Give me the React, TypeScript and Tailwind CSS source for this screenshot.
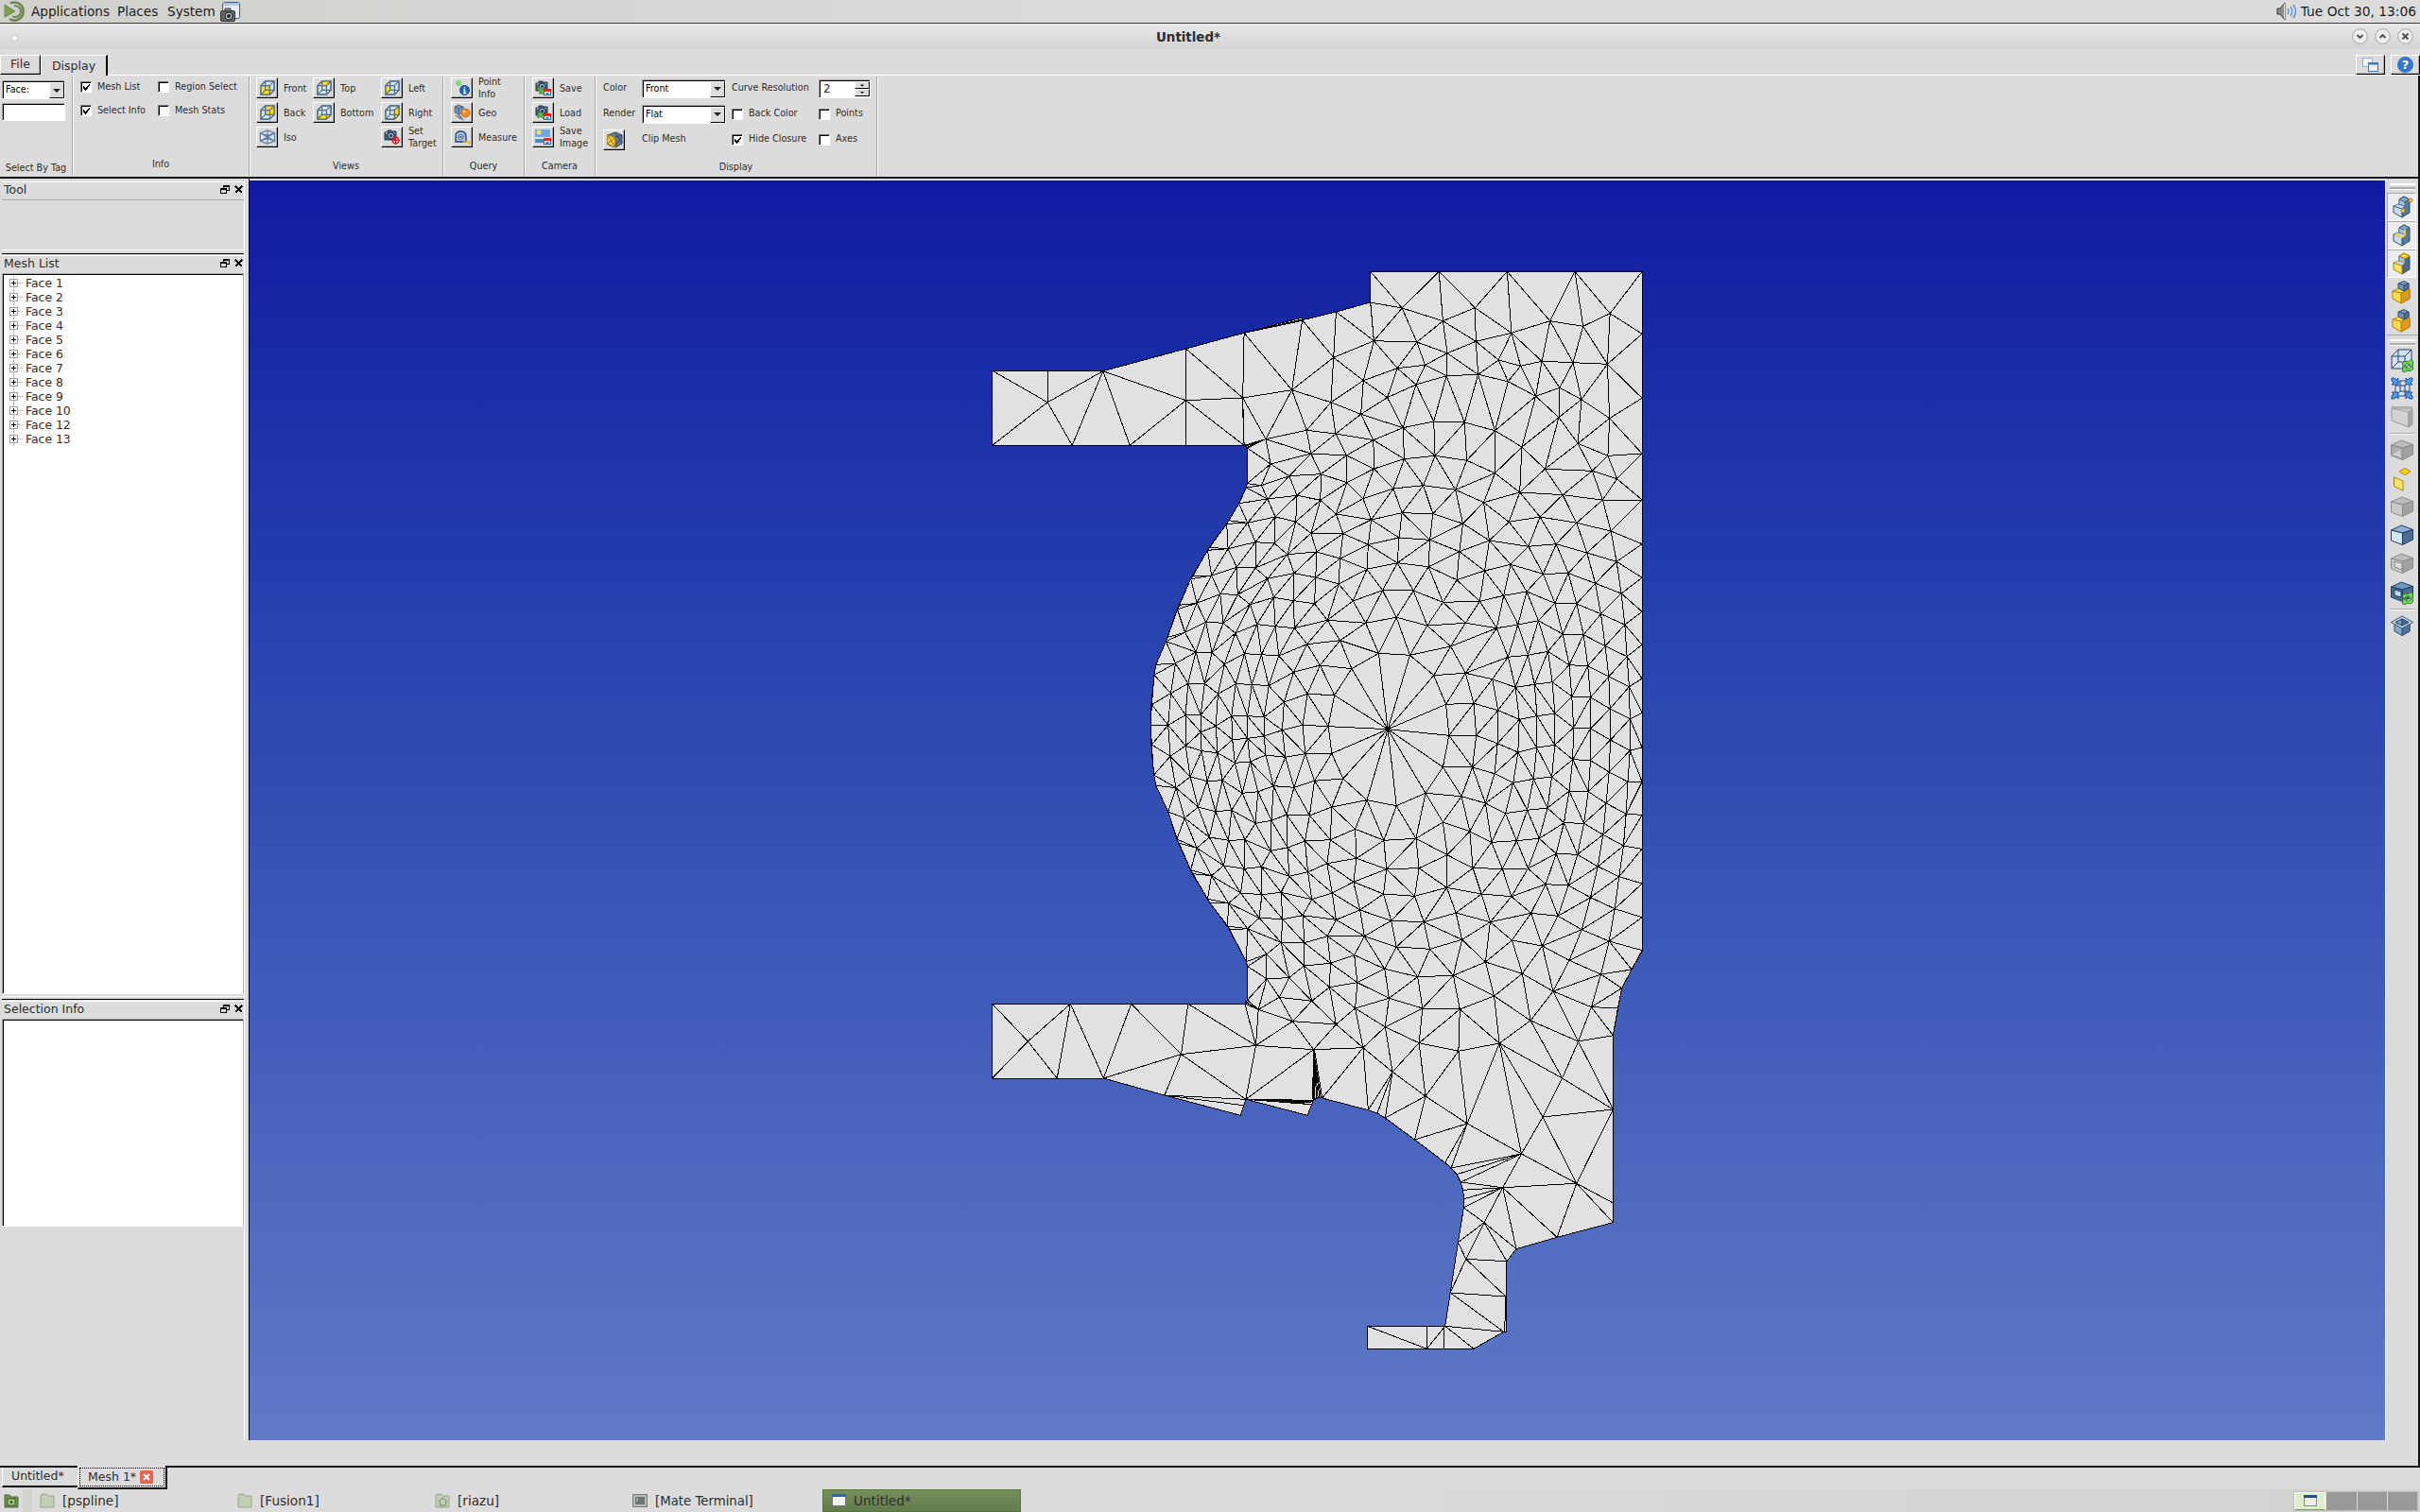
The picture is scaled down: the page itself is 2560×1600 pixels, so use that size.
import React from "react";

type Pt = [number, number];
const parse = (s: string, oy: number): Pt[] =>
  s.trim().split(/\s+/).map((p) => {
    const [x, y] = p.split(",").map(Number);
    return [x / 2.17778 + 766, y / 3 + oy];
  });

const UP = 79;
const MID = 499;
const LOW = 849;

const upper = parse(
  `914,52 1072,52 1229,52 1385,52 1540,52 914,150 987,168 1155,167 1081,209 1328,209 1466,185 1404,226 1540,250
835,180 757,206 623,247 922,272 1021,276 1157,274 1239,247 829,325 1091,311 1209,333 1260,352 1309,337 1381,341 1460,346
976,359 1040,349 1089,383 1162,379 1231,401 1350,421 1295,448 1400,458 1540,454 898,398 1019,411 733,428 823,467 953,452 620,453 623,604
892,505 989,548 1060,528 1131,531 1201,557 1348,515 1465,518 767,556 834,567 921,587 673,584 1263,609 1392,598 1461,637 1540,630
1063,637 1136,652 992,647 777,630 859,636 684,663 1316,679 1425,685 1482,710 1201,692 922,678
630,612 630,725 727,701 800,695 860,722 663,731 967,741 1036,731 1110,745 1258,753 1357,761 1449,777 1540,777
628,738 677,774 745,763 799,778 897,773 1175,785 611,788 695,831 742,846 835,822 916,840 987,818 1058,821 1127,852 1233,847 1305,831 1389,850 1468,876
588,842 583,853 631,850 777,883 851,884 909,919 980,897 1051,904 1188,906 1278,925 1342,917 1413,945 1540,917
649,911 693,915 586,932 543,928 539,937 723,950 790,942 844,963 1119,941 976,977 1048,989 1481,973 1237,982 1177,1002 1312,1012 1370,1010 1540,1024
606,991 649,993 548,1017 505,1018 500,1028 738,1010 677,1027 788,1023 906,997 841,1044 1113,1031 1432,1042 1492,1074
568,1076 608,1078 514,1105 474,1111 469,1124 691,1087 637,1109 737,1097 785,1106 874,1098 942,1064 1013,1065 1081,1102 1166,1099 1221,1081 1274,1068 1339,1105 1389,1107 1445,1139 1540,1132
535,1165 575,1168 487,1198 447,1213 443,1226 653,1172 695,1178 603,1200 739,1184 815,1159 903,1168 974,1150 1045,1176 1133,1168 1205,1184 1254,1173 1301,1160 1357,1203 1405,1205 1500,1173 1455,1241
768,1235 844,1223 1099,1242 1540,1237`, UP);

const middle = parse(
  `512,0 549,2 465,36 420,40 416,73 578,38 624,5 663,8 703,12 737,64 798,42 871,53 933,4 1005,10 1060,74 1133,67 1195,86 1231,16 1277,10 1323,-2 1372,41 1415,44 1463,78 1505,14
1510,110 1540,84 1333,95 1292,103 1248,112 1378,141 1421,144 494,100 532,100 454,131 410,167 604,101 641,103 680,107 563,133 769,133 831,137 715,159 1088,166 1152,163 1208,185 1466,180 1339,195 1298,203 1257,214 1512,212 1540,193
488,200 523,200 448,232 408,232 594,203 631,203 669,206 558,235 523,254 711,248 758,232 817,236 954,245 1095,265 1158,265 1207,290 1254,318 1382,240 1421,243 1467,279 1339,295 1297,303 1512,313 1540,303
596,278 631,274 669,267 488,298 410,294 525,314 562,320 453,331 637,348 602,352 673,327 718,334 764,323 825,322
415,390 499,396 1081,365 1149,366 1200,386 1380,341 1421,344 1464,381 1332,396 1290,403 1243,415 1507,412 1540,412
420,424 466,431 538,410 573,407 619,448 655,443 691,425 738,430 785,409 851,402 1041,448 1124,458 1179,480 1372,441 1416,443 1457,480 1322,495 1275,502 1225,512 1503,514 1540,517
448,507 517,492 557,506 594,502 486,527 649,544 686,535 721,516 774,519 825,492 906,470 974,488 1081,540 1143,569 1360,542 1406,544 1450,580 1303,592 1251,599 1193,604 1497,615 1540,625
468,594 473,607 543,588 587,598 625,596 514,622 684,631 723,621 763,600 822,596 879,562 945,598 1019,592 1091,644 1150,686 1218,688 1277,687 1342,640 1391,643 1438,681 1487,713 1540,735
500,692 505,704 576,678 623,688 663,682 548,710 727,712 770,698 814,671 882,655 951,689 1026,686 1090,748 1170,768 1239,776 1318,737 1370,741 1421,779 1477,815 1540,842
539,784 544,796 587,797 615,765 664,770 708,763 779,785 826,765 875,730 944,768 1016,775 1111,828 1190,857 1284,829 1346,838 1401,881 1464,918 1540,947
585,870 590,882 631,878 658,844 712,848 758,836 835,850 890,819 962,853 1037,857 1125,913 1240,915 1310,933 1372,979 1445,1023 1516,1008
675,959 708,922 762,923 815,902 900,902 877,962 974,936 1051,943 1179,984 1264,1021 1335,1077
628,983 631,998 761,996 822,988 947,1006 1023,1031 1105,1027 1199,1092 1423,1127 1493,1067 1484,1130
675,1037 727,1034 820,1064 884,1049 957,1099 1034,1131 1120,1134 1283,1170
631,1105 704,1096 779,1108 656,1135 879,1131 735,1172 835,1182 948,1190`, MID);

const lower = parse(`625,67 1393,186 1473,167 1211,192 1117,217 1026,191 897,206 783,212 650,199 965,283`, LOW);

const region: Pt[] = [
  ...parse(`914,51 1541,51`, UP),
  ...parse(`1541,947 1493,1067`, MID),
  ...parse(`1474,167 1393,186 1283,120 1211,192 1117,217 1026,191 965,283 897,206 783,212 650,199 625,67 631,55`, LOW),
  ...parse(`630,998 628,983 590,882 544,796 505,704 473,607 448,507 420,424 415,390 409,294 408,232 409,167 416,73 420,40`, MID),
  ...parse(`443,1226 469,1124 500,1028 539,937 583,853 611,788 628,738 630,725 630,612 622,604 618,453 623,246 757,206 835,180 914,150`, UP),
];

const outline: Pt[] = [
  ...parse(`914,52 1540,52`, UP),
  ...parse(`1540,950 1516,1008 1493,1067`, MID),
  ...parse(`1473,167 1473,761 1344,808 1250,845 1228,884 1227,1108 1221,1108 1152,1162 907,1162 907,1090 1086,1090 1098,984 1116,824 1129,714 1130,686 1127,658 1122,633 1113,608 1100,588 1086,571 1016,498 948,429 930,414 909,404 803,366 796,363 783,372 769,421 627,370 615,421 440,357 299,303 43,303 43,67 625,67 631,55`, LOW),
  ...parse(`630,998 628,983 587,876 541,790 502,700 470,600 448,507 420,424 415,390 409,294 408,232 409,167 416,73 420,40`, MID),
  ...parse(`443,1226 469,1124 500,1028 539,937 583,853 611,788 628,738 630,725 630,612 625,604 43,604 43,367 298,368 489,297 623,247 755,199 757,206 835,180 914,150`, UP),
];

const upperEdges = [
  "43,367 170,467 298,368", "170,367 170,467 43,604", "170,467 227,604 298,368 360,604 489,461 298,368",
  "489,297 489,604", "489,297 620,453 489,461 623,604", "620,453 620,490 623,604 673,584 626,607 632,611 673,584 628,613", "623,604 660,590 630,610",
  "623,247 757,208", "655,237 757,204", "630,725 663,731 628,738",
];
const lowerEdges = [
  "43,67 125,186 192,303", "43,303 125,186 223,67 192,303", "223,67 299,303 363,67 478,227 299,303",
  "440,357 478,227 494,67 650,199 478,227 627,370 650,199", "625,67 650,199 656,85 625,58 645,78 625,67", "656,85 627,62", "783,212 627,370",
  "783,212 781,370", "783,212 784,368", "783,212 786,368", "783,212 790,366", "783,212 793,364", "783,212 797,364", "783,212 800,365", "785,212 803,366",
  "897,206 803,366", "897,206 909,404 965,283 930,414", "965,283 948,429 1041,360 965,283", "1026,191 1041,360 1016,498 1137,447 1041,360 1117,217 1137,447 1211,192",
  "1086,571 1137,447 1100,588 1262,543 1137,447", "1113,608 1262,543 1122,633", "1211,192 1262,543 1219,650 1389,637 1262,543 1311,426 1356,303 1211,192 1311,426 1473,402 1356,303 1283,120",
  "1311,426 1389,637 1473,402 1393,186 1356,303", "1473,699 1389,637 1473,761", "1389,637 1344,808 1219,650 1250,845 1176,761 1219,650 1122,633", "1127,658 1219,650 1130,686", "1129,714 1219,650",
  "1129,714 1176,761 1116,824 1134,877 1176,761 1228,884 1134,877 1098,984 1226,996 1134,877", "1098,984 1221,1108 1086,1090 1152,1162", "1226,996 1223,1108", "1044,1090 1044,1162 1086,1090", "1084,1090 1084,1162", "907,1090 1044,1162",
  "440,357 627,370", "440,357 622,389", "627,370 782,374", "627,370 780,373", "627,371 781,377", "680,376 778,380 720,379 778,386 627,370",
];

function inside(x: number, y: number, poly: Pt[]) {
  let hit = false;
  for (let i = 0, j = poly.length - 1; i < poly.length; j = i++) {
    const [xi, yi] = poly[i];
    const [xj, yj] = poly[j];
    if (yi > y !== yj > y && x < ((xj - xi) * (y - yi)) / (yj - yi) + xi) hit = !hit;
  }
  return hit;
}

// Bowyer-Watson triangulation; returns one SVG path holding every triangle of the part.
function triangulate(src: Pt[]): string {
  const p: Pt[] = [...src, [-20000, -10000], [20000, -10000], [1000, 30000]];
  const n = src.length;
  type Tri = { v: number[]; x: number; y: number; r: number };
  const make = (a: number, b: number, c: number): Tri => {
    const [ax, ay] = p[a], [bx, by] = p[b], [cx, cy] = p[c];
    const d = 2 * (ax * (by - cy) + bx * (cy - ay) + cx * (ay - by)) || 1e-9;
    const A = ax * ax + ay * ay, B = bx * bx + by * by, C = cx * cx + cy * cy;
    const x = (A * (by - cy) + B * (cy - ay) + C * (ay - by)) / d;
    const y = (A * (cx - bx) + B * (ax - cx) + C * (bx - ax)) / d;
    return { v: [a, b, c], x, y, r: (x - ax) ** 2 + (y - ay) ** 2 };
  };
  let tris = [make(n, n + 1, n + 2)];
  for (let i = 0; i < n; i++) {
    const edges = new Map<string, [number, number]>();
    const keep: Tri[] = [];
    for (const t of tris) {
      if ((p[i][0] - t.x) ** 2 + (p[i][1] - t.y) ** 2 < t.r - 1e-6) {
        for (let k = 0; k < 3; k++) {
          const a = t.v[k], b = t.v[(k + 1) % 3];
          const key = a < b ? a + "_" + b : b + "_" + a;
          if (edges.has(key)) edges.delete(key);
          else edges.set(key, [a, b]);
        }
      } else keep.push(t);
    }
    edges.forEach(([a, b]) => keep.push(make(a, b, i)));
    tris = keep;
  }
  const lines = new Set<string>();
  for (const t of tris) {
    if (t.v.some((k) => k >= n)) continue;
    const gx = (p[t.v[0]][0] + p[t.v[1]][0] + p[t.v[2]][0]) / 3;
    const gy = (p[t.v[0]][1] + p[t.v[1]][1] + p[t.v[2]][1]) / 3;
    if (!inside(gx, gy, region)) continue;
    for (let k = 0; k < 3; k++) {
      const a = Math.min(t.v[k], t.v[(k + 1) % 3]);
      const b = Math.max(t.v[k], t.v[(k + 1) % 3]);
      lines.add(`M${p[a][0].toFixed(1)} ${p[a][1].toFixed(1)}L${p[b][0].toFixed(1)} ${p[b][1].toFixed(1)}`);
    }
  }
  return [...lines].join("");
}

const str = (q: Pt[]) => q.map(([x, y]) => `${x.toFixed(1)},${y.toFixed(1)}`).join(" ");
const meshPath = triangulate([...upper, ...middle, ...lower]);

function Mesh() {
  return (
    <svg width="2259" height="1333" className="block" shapeRendering="crispEdges" fill="none" stroke="#000" strokeWidth="1">
      <polygon points={str(outline)} fill="#e1e1e1" />
      <path d={meshPath} />
      {upperEdges.map((e) => <polyline key={e} points={str(parse(e, UP))} />)}
      {lowerEdges.map((e) => <polyline key={e} points={str(parse(e, LOW))} />)}
      <polygon points={str(outline)} />
    </svg>
  );
}

/* ---------- icons ---------- */
const faces: Record<string, string> = {
  Front: "2,7 12,7 12,17 2,17",
  Back: "7,2 17,2 17,12 7,12",
  Top: "2,7 7,2 17,2 12,7",
  Bottom: "2,17 7,12 17,12 12,17",
  Left: "2,7 7,2 7,12 2,17",
  Right: "12,7 17,2 17,12 12,17",
};
function ViewIcon({ face }: { face: string }) {
  return (
    <svg width="18" height="18" viewBox="0 0 19 19">
      {face === "Iso" ? (
        <g fill="#d3e3f5" stroke="#5f7a96" strokeWidth="1.2">
          <polygon points="1.500,5 9.500,2 17.500,5 17.500,14 9.500,17 1.500,14" />
          <path d="M1.500 5L17.500 14M17.500 5L1.500 14M9.500 2V17M1.500 5L9.500 8L17.500 5M1.500 14L9.500 11L17.500 14" fill="none" />
        </g>
      ) : (
        <g stroke="#55708c" strokeWidth="1.3" strokeLinejoin="round">
          <polygon points="2,7 7,2 17,2 17,12 12,17 2,17" fill="#d3e3f5" />
          <polygon points={faces[face]} fill="#fddf10" stroke="#c89b10" />
          <path d="M2 7H12V17M12 7L17 2M7 2V12H17M7 12L2 17" fill="none" />
          <polygon points="2,7 7,2 17,2 17,12 12,17 2,17" fill="none" />
        </g>
      )}
    </svg>
  );
}
const Camera = () => (
  <g>
    <path d="M1 4H4V2H8V3H13V12H1Z" fill="#4b6178" stroke="#2b3a49" />
    <path d="M2 5H4M10 5H12" stroke="#c6d2de" />
    <circle cx="7.500" cy="7.500" r="3.500" fill="#8fb0d0" stroke="#182635" />
    <circle cx="7.500" cy="7.500" r="1.500" fill="#1d3b60" />
  </g>
);
const Floppy = () => (
  <g>
    <rect x="9.500" y="10.500" width="7" height="6" fill="#fff" stroke="#2462a8" />
    <rect x="9" y="10" width="8" height="3" fill="#e62222" />
    <rect x="11.500" y="14" width="3" height="3" fill="#3a78be" />
  </g>
);
function ToolIcon({ name }: { name: string }) {
  if (faces[name] || name === "Iso") return <ViewIcon face={name} />;
  return (
    <svg width="18" height="18" viewBox="0 0 18 18">
      {name === "Target" && (
        <g><Camera /><g stroke="#e01818" fill="none" strokeWidth="1.200"><circle cx="12.500" cy="12.500" r="3.300" /><path d="M12.500 8V17M8 12.500H17" /></g></g>
      )}
      {name === "Point" && (
        <g>
          <circle cx="5" cy="4" r="3" fill="#7fd67a" /><circle cx="8" cy="7" r="2" fill="#a6dba0" />
          <circle cx="11.500" cy="11.500" r="5" fill="#1f68c2" stroke="#184e94" />
          <path d="M11.500 8V9.200M11.500 10.500V14.500M10.300 10.800H12M10 14.500H13.300" stroke="#fff" strokeWidth="1.400" />
        </g>
      )}
      {name === "Geo" && (
        <g strokeWidth=".8">
          <path d="M1 3L5 1L10 3V9L5 11L1 9Z" fill="#7795b5" stroke="#40566d" /><path d="M1 3L5 5L10 3M5 5V11" stroke="#40566d" fill="none" />
          <path d="M2 12L8 16M5 11L10 17" stroke="#62778d" strokeWidth="1.500" />
          <circle cx="12.500" cy="9.500" r="4.500" fill="#f28a1c" stroke="#b8600c" /><circle cx="11" cy="8" r="1.800" fill="#fcc07a" />
        </g>
      )}
      {name === "Measure" && (
        <g>
          <path d="M2 14V8Q2 3 7.500 3Q13 3 13 9V14Z" fill="#a9c3e6" stroke="#24457e" strokeWidth="1.400" />
          <circle cx="7.500" cy="9" r="2.500" fill="#fff" stroke="#24457e" /><circle cx="7.500" cy="9" r="1" fill="#111" />
          <path d="M10 14H16.500V17" stroke="#e8b414" strokeWidth="1.600" fill="none" />
        </g>
      )}
      {(name === "Save" || name === "Load") && (
        <g>
          <Camera />
          {name === "Save" ? <path d="M3 8L8 11L10 9V15H4L6 13L2 10Z" fill="#59c24b" stroke="#27751f" strokeWidth=".8" /> : <path d="M3 9H9L8 11L11 14L9 16L6 13L3 15Z" fill="#59c24b" stroke="#27751f" strokeWidth=".8" />}
          <Floppy />
        </g>
      )}
      {name === "Image" && (
        <g>
          <rect x="0" y="1" width="16" height="13" fill="#6ea8e4" /><rect x="0" y="9" width="16" height="2" fill="#d9edf8" /><rect x="0" y="11" width="16" height="4" fill="#4c8bc0" />
          <circle cx="4" cy="4" r="2.500" fill="#ffe04a" /><Floppy />
        </g>
      )}
      {name === "Clip" && (
        <g strokeWidth="1">
          <path d="M2 4L10 1L17 4V13L10 17L2 14Z" fill="#5f7c98" stroke="#34485c" /><path d="M10 6L17 4M10 6V17M10 2L17 12M17 5L10 15" stroke="#34485c" />
          <path d="M1.500 4L9.500 7V16.500L1.500 13Z" fill="#fbd640" stroke="#c08f10" strokeWidth="1.300" /><path d="M1.500 4L9.500 16M9.500 7L1.500 13" stroke="#8b6c1c" />
        </g>
      )}
    </svg>
  );
}

function Box({ t, l, r, s }: { t: string; l: string; r: string; s: string }) {
  return (
    <g stroke={s} strokeWidth="1" strokeLinejoin="round">
      <polygon points="0.500,6 11.500,1 23.500,5.500 12.500,9" fill={t} />
      <polygon points="0.500,6 12.500,9 12.500,21.500 0.500,17" fill={l} />
      <polygon points="12.500,9 23.500,5.500 23.500,16 12.500,21.500" fill={r} />
    </g>
  );
}
const Refresh = () => (
  <g stroke="#1f6b1f" strokeWidth=".8" fill="#6fdc50">
    <path d="M12.500 18V15Q14 12.500 19 13.500L21 11.500L23.500 13V18H18.500L20 16.300Q16 15 15.500 18Z" />
    <path d="M23.500 19V22Q22 24.500 17 23.500L15 24.700L12.500 24V19H17.500L16 20.800Q20 22 20.500 19Z" />
  </g>
);
function Blocks({ base, side, top, s }: { base: string; side: string; top: string; s: string }) {
  return (
    <g strokeWidth="1" strokeLinejoin="round">
      <polygon points="9,4 14,1 20,4 20,18 12,23 12,12 9,10" fill={side} stroke="#34506e" />
      <polygon points="9,4 14,1 20,4 15,7" fill={top} stroke={top === "#fddf10" ? s : "#34506e"} />
      <polygon points="9,4 15,7 15,12 9,10" fill="#a9c2dc" stroke="#45617e" strokeWidth=".6" />
      <polygon points="3,11 12,14 12,23 3,18" fill={base} stroke={s} />
      <polygon points="3,11 8,9 15,11 12,14" fill="#c5d9ee" stroke={s} strokeWidth=".7" />
    </g>
  );
}
function SideIcon({ k }: { k: string }) {
  const g = { t: "#bdbdbd", l: "#c9c9c9", r: "#a2a2a2", s: "#8b8b8b" };
  return (
    <svg width="24" height="25" viewBox="0 0 24 25">
      {k === "pts" && <g><Blocks base="#c7dcf2" side="#57779c" top="#84a5cb" s="#34506e" /><g fill="#fcd03a" stroke="#b98208"><circle cx="21" cy="5" r="2" /><circle cx="13" cy="16" r="2" /></g></g>}
      {k === "edge" && <g><Blocks base="#c7dcf2" side="#57779c" top="#84a5cb" s="#34506e" /><path d="M4 11L12 14L15 12V6" stroke="#f6d326" strokeWidth="1.800" fill="none" /></g>}
      {k === "face" && <Blocks base="#fce868" side="#4c6888" top="#fddf10" s="#b27c0c" />}
      {(k === "body" || k === "body2") && (
        <g strokeLinejoin="round">
          <g stroke="#b27c0c"><polygon points="2,11 12,7 20,9 20,19 11,24 2,19" fill="#fcdc4c" /><polygon points="11,13 20,9 20,19 11,24" fill="#dd9b22" /><path d="M2 11L11 13" /></g>
          <g stroke="#34506e"><polygon points="8,3 14,0.500 19,3 19,8 14,11 8,8" fill="#7696ba" /><polygon points="14,5 19,3 19,8 14,11" fill="#4f6d90" /><path d="M8 3L14 5" /></g>
        </g>
      )}
      {k === "wire" && <g><g fill="#d3e3f5" stroke="#28435f"><polygon points="1,8 8,1 22,1 22,14 15,21 1,21" /><path d="M1 8H15V21M15 8L22 1M8 1V14H22M8 14L1 21" fill="none" /></g><Refresh /></g>}
      {k === "fit" && (
        <g>
          <g fill="#d3e3f5" stroke="#28435f"><polygon points="5,9 10,4 20,4 20,15 15,20 5,20" /><path d="M5 9H15V20M15 9L20 4M10 4V15H20M10 15L5 20" fill="none" /></g>
          <g fill="#4f98f4" stroke="#154a98" strokeWidth=".9"><path d="M1 1H4L6 3L8 1V8H1L3 6L1 4Z" /><path d="M23 1H20L18 3L16 1V8H23L21 6L23 4Z" /><path d="M1 23H4L6 21L8 23V16H1L3 18L1 20Z" /><path d="M23 23H20L18 21L16 23V16H23L21 18L23 20Z" /></g>
        </g>
      )}
      {k === "clip" && <g stroke="#9b9b9b"><polygon points="1,3 1,1 23,1 23,4 19,5" fill="#b0b0b0" stroke="none" /><polygon points="1,3 19,7 19,23 1,16" fill="#d2d2d2" /><polygon points="19,7 23,4 23,20 19,23" fill="#a6a6a6" /></g>}
      {k === "open" && <g><Box {...g} l="#adadad" /><path d="M2 16L10 11L11 19Z" fill="#d0d0d0" /></g>}
      {k === "yel" && <g stroke="#b27c0c"><polygon points="9,4 15,0.500 21,4 15,7.500" fill="#fdd800" /><polygon points="3.500,10 13,14 13,24 3.500,19.500" fill="#fce868" /></g>}
      {k === "grey" && <Box {...g} />}
      {k === "blue" && <Box t="#8db2db" l="#d4e6f8" r="#4d6c91" s="#1f3c5c" />}
      {k === "hole" && <g><Box {...g} /><path d="M4 9L12 11V18L4 15Z" fill="#dcdcdc" stroke="#888" /></g>}
      {k === "bref" && <g><Box t="#6f96c0" l="#4d6f94" r="#4d6c91" s="#1f3c5c" /><path d="M4 9L11 11V17L4 15Z" fill="#c5dcf2" stroke="#1f3c5c" /><Refresh /></g>}
      {k === "cut" && (
        <g stroke="#28435f" strokeWidth=".9" strokeLinejoin="round">
          <polygon points="4,9 12,13 20,9 20,17 12,21.500 4,17" fill="#87a7ca" /><polygon points="12,13 20,9 20,17 12,21.500" fill="#54749a" />
          <path d="M0.500 7.500L12 1L23.500 7.500L12 14ZM5 7.500L12 11L19 7.500L12 4Z" fill="#cadbec" fillRule="evenodd" /><polygon points="5,7.500 12,4 12,11" fill="#7d9dc0" /><polygon points="19,7.500 12,4 12,11" fill="#4d6c91" />
        </g>
      )}
    </svg>
  );
}

/* ---------- widgets ---------- */
function Check({ on, children }: { on?: boolean; children: string }) {
  return (
    <div className="flex h-3 items-center gap-[6px]">
      <span className="flex size-3 items-center justify-center border border-[#777] border-r-white border-b-white bg-white shadow-[inset_1px_1px_0_#000]">
        {on && <svg width="9" height="9" viewBox="0 0 9 9" className="mt-px ml-px" shapeRendering="crispEdges"><path d="M1 3.500L3.500 6.500L8 1.500" fill="none" stroke="#000" strokeWidth="1.800" /></svg>}
      </span>
      <span className="whitespace-nowrap">{children}</span>
    </div>
  );
}
function Combo({ children, w }: { children: string; w: string }) {
  return (
    <div className={`${w} flex h-5 border border-[#a5a5a5] border-r-white border-b-white bg-white shadow-[inset_1px_1px_0_#000]`}>
      <span className="flex-1 pl-[3px] leading-[17px] whitespace-nowrap text-black">{children}</span>
      <span className="mt-px flex w-4 items-center justify-center border border-white border-r-black border-b-black bg-[#dcdcdc]">
        <svg width="8" height="4"><path d="M0 0H8L4 4Z" fill="#222" /></svg>
      </span>
    </div>
  );
}
function Btn({ icon, label }: { icon: string; label: string }) {
  return (
    <div className="flex h-[26px] items-start gap-[6px]">
      <span className="flex h-[22px] w-[23px] shrink-0 items-center justify-center border border-white border-r-black border-b-black bg-[#dcdcdc] shadow-[inset_-1px_-1px_0_#aaa]"><ToolIcon name={icon} /></span>
      <span className="flex h-[22px] items-center leading-[13px] whitespace-pre">{label}</span>
    </div>
  );
}
function Group({ w, title, pad, children, pb = "pb-[4px]" }: { w: string; title: string; pad: string; pb?: string; children: React.ReactNode }) {
  return (
    <section className={`${w} ${pb} flex shrink-0 flex-col justify-between border-r border-[#a5a5a5] shadow-[1px_0_0_#fff]`}>
      <div className={pad}>{children}</div>
      <div className="text-center leading-3">{title}</div>
    </section>
  );
}
function DockTitle({ children }: { children: string }) {
  return (
    <div className="flex h-[19px] items-center border-t border-white pb-[3px] pl-[2px] text-[12.5px] leading-4">
      <span className="flex-1">{children}</span>
      <svg width="26" height="12" shapeRendering="crispEdges" fill="none" stroke="#000">
        <path d="M4.500 4V1.500H10.500V6.500H8M4 2H11M1.500 4.500H7.500V9.500H1.500ZM1 5H8" />
        <path d="M17 2L24 9M24 2L17 9" strokeWidth="1.600" />
      </svg>
    </div>
  );
}
function Folder({ home }: { home?: boolean }) {
  return (
    <svg width="17" height="16" viewBox="0 0 17 16">
      <path d="M1 3Q1 1 3 1H7L8.500 3H15V15H1Z" fill="#c3ceb6" stroke="#97a58a" />
      {home && <path d="M4 9L8.500 5L13 9M5.500 9V13H11.500V9" fill="none" stroke="#8b997e" strokeWidth="1.300" />}
    </svg>
  );
}
function SideButton({ k, on }: { k: string; on?: boolean }) {
  return (
    <div className={on ? "flex h-[30px] w-[31px] items-center justify-center border border-[#aaa] border-r-white border-b-white bg-[#ededed]" : "flex h-[30px] w-[31px] items-center justify-center"}>
      <SideIcon k={k} />
    </div>
  );
}
const Handle = () => <div className="ml-[3px] h-[6px] w-[27px] border-y-2 border-t-white border-b-[#aaa] shadow-[0_1px_0_#fff]" />;
const Rule = () => <div className="my-[2px] ml-[3px] h-[2px] w-[27px] border-t border-b border-t-[#aaa] border-b-white" />;

const names = [1, 2, 3, 4, 5, 6, 7, 8, 9, 10, 12, 13];

export default function App() {
  return (
    <div className="flex h-[1600px] w-[2560px] flex-col overflow-hidden bg-[#dcdcdc] font-['DejaVu_Sans',sans-serif] text-[#2d2d2d]">
      {/* desktop panel */}
      <header className="flex h-[25px] shrink-0 items-center border-b border-[#3c3c3c] bg-linear-to-r from-[#d0d1cc] to-[#dcdcdc] to-50% pl-1 text-[13.6px] text-[#1c1c1c]">
        <svg width="24" height="22" viewBox="0 0 24 22" fill="none" stroke="#6f8a52">
          <path d="M1 4L12 11L1 17Z" fill="#7ba04c" />
          <path d="M7 2.500A9.500 9.500 0 1 1 6 19" strokeWidth="2.600" /><path d="M11 5.500A5.800 5.800 0 1 1 9 16" strokeWidth="2" />
        </svg>
        <span className="ml-[5px] w-[91px]">Applications</span>
        <span className="w-[53px]">Places</span>
        <span className="w-[56px]">System</span>
        <svg width="22" height="22" viewBox="0 0 22 22">
          <rect x="2.500" y="1.500" width="18" height="17" rx="2" fill="#e9edf2" stroke="#2d5c9a" /><rect x="3" y="2" width="17" height="3" fill="#b7c8de" />
          <rect x=".5" y="10.500" width="15" height="11" rx="1.500" fill="#666" stroke="#333" /><path d="M5 10V8H11V10" fill="#999" stroke="#333" />
          <circle cx="9" cy="16" r="4" fill="#b9c2cc" stroke="#222" /><circle cx="9" cy="16" r="2" fill="#152030" />
        </svg>
        <div className="flex-1" />
        <svg width="22" height="20" viewBox="0 0 22 20"><path d="M1 7H4L9 1V19L4 13H1Z" fill="#8c8c8c" stroke="#3a3a3a" /><path d="M8.500 2V18" stroke="#e8e8e8" /><path d="M12 7Q14 10 12 13M15 5Q18.500 10 15 15M18 3Q23 10 18 17" fill="none" stroke="#5b8cc4" strokeWidth="1.300" /></svg>
        <span className="mr-[4px] ml-[4px] text-[13.8px]">Tue Oct 30, 13:06</span>
      </header>
      {/* title bar */}
      <div className="grid h-[27px] shrink-0 grid-cols-[72px_1fr_72px] items-center bg-linear-to-b from-[#e9e9e9] to-[#d3d3d3]">
        <span className="mt-1 ml-3 size-[7px] rounded-full border border-[#c4c4c4] bg-white" />
        <span className="pt-[2px] pr-[46px] text-center text-[13.4px] leading-6 font-bold">Untitled*</span>
        <span className="flex gap-[7px]">
          {["M5.500 7L8.500 10L11.500 7", "M5.500 10L8.500 7L11.500 10", "M5.500 5.500L11.500 11.500M11.500 5.500L5.500 11.500"].map((d) => (
            <svg key={d} width="17" height="17"><circle cx="8.500" cy="8.500" r="7.800" fill="#eee" stroke="#a3a3a3" /><path d={d} fill="none" stroke="#4a4a4a" strokeWidth="1.800" /></svg>
          ))}
        </span>
      </div>
      {/* ribbon tabs */}
      <div className="flex h-7 shrink-0 items-end text-[12.5px]">
        <div className="mb-px flex h-[21px] w-[43px] items-center border border-white border-r-black border-b-black pl-[10px] shadow-[inset_-1px_-1px_0_#aaa]">File</div>
        <div className="flex h-[22px] w-[71px] items-center justify-center border-t border-r-2 border-l border-white border-r-black pt-px">Display</div>
        <div className="h-full flex-1 border-b border-white" />
        <div className="flex h-full items-start gap-[6px] border-b border-white pt-[6px]">
          <span className="flex h-[21px] w-[31px] items-center justify-center border border-white border-r-black border-b-black shadow-[inset_-1px_-1px_0_#aaa]">
            <svg width="18" height="16"><rect x=".5" y=".5" width="10" height="9" fill="#f4f8fd" stroke="#8fb4dc" /><rect x="6.500" y="5.500" width="10" height="9" fill="#e4eefa" stroke="#3f78b8" /><path d="M6 6.500H17" stroke="#3f78b8" strokeWidth="2" /></svg>
          </span>
          <span className="flex h-[21px] w-[31px] items-center justify-center border border-white border-r-black border-b-black shadow-[inset_-1px_-1px_0_#aaa]">
            <span className="flex size-[17px] items-center justify-center rounded-full bg-[#3577d4] text-[13px] leading-none font-bold text-white">?</span>
          </span>
        </div>
      </div>
      {/* ribbon */}
      <div className="flex h-[109px] shrink-0 border-r-2 border-b-2 border-[#111] text-[9.65px]">
        <div className="flex h-[107px] pt-px pb-px">
          <Group w="w-[77px]" title="Select By Tag" pad="flex flex-col gap-1 pl-[2px] pt-[4px]" pb="pb-[2px]">
            <Combo w="w-[67px]">Face:</Combo>
            <div className="h-[19px] w-[67px] border border-[#a5a5a5] border-r-white border-b-white bg-white shadow-[inset_1px_1px_0_#000]" />
          </Group>
          <Group w="w-[187px]" title="Info" pb="pb-[6px]" pad="grid grid-cols-[82px_1fr] gap-y-[13px] pl-2 pt-[5px]">
            <Check on>Mesh List</Check><Check>Region Select</Check>
            <Check on>Select Info</Check><Check>Mesh Stats</Check>
          </Group>
          <Group w="w-[205px]" title="Views" pad="grid grid-cols-[60px_72px_60px] pl-[7px] pt-[1px]">
            <Btn icon="Front" label="Front" /><Btn icon="Top" label="Top" /><Btn icon="Left" label="Left" />
            <Btn icon="Back" label="Back" /><Btn icon="Bottom" label="Bottom" /><Btn icon="Right" label="Right" />
            <Btn icon="Iso" label="Iso" /><span /><Btn icon="Target" label={"Set\nTarget"} />
          </Group>
          <Group w="w-[86px]" title="Query" pad="pl-2 pt-[1px]">
            <Btn icon="Point" label={"Point\nInfo"} /><Btn icon="Geo" label="Geo" /><Btn icon="Measure" label="Measure" />
          </Group>
          <Group w="w-[75px]" title="Camera" pad="pl-2 pt-[1px]">
            <Btn icon="Save" label="Save" /><Btn icon="Load" label="Load" /><Btn icon="Image" label={"Save\nImage"} />
          </Group>
          <Group w="w-[298px]" title="Display" pb="pb-[3px]" pad="-mt-px grid grid-cols-[41px_95px_92px_1fr] auto-rows-[27px] items-center pl-2">
            <span>Color</span><Combo w="w-[89px]">Front</Combo><span className="whitespace-nowrap">Curve Resolution</span>
            <div className="flex h-5 w-[55px] border border-[#a5a5a5] border-r-white border-b-white bg-white shadow-[inset_1px_1px_0_#000]">
              <span className="flex-1 pl-1 text-[12px] leading-[18px]">2</span>
              <span className="mt-px flex w-4 flex-col">
                {["M1 3L3 1L5 3Z", "M1 1L3 3L5 1Z"].map((d) => (
                  <span key={d} className="flex h-2 items-center justify-center border border-white border-r-black border-b-black bg-[#dcdcdc]"><svg width="6" height="4"><path d={d} /></svg></span>
                ))}
              </span>
            </div>
            <span>Render</span><Combo w="w-[89px]">Flat</Combo><Check>Back Color</Check><Check>Points</Check>
            <span className="flex h-[22px] w-[23px] items-center justify-center border border-white border-r-black border-b-black shadow-[inset_-1px_-1px_0_#aaa]"><ToolIcon name="Clip" /></span>
            <span>Clip Mesh</span><Check on>Hide Closure</Check><Check>Axes</Check>
          </Group>
        </div>
      </div>
      {/* work area */}
      <main className="flex h-[1335px] shrink-0 border-r-2 border-[#111]">
        <aside className="flex w-[258px] shrink-0 flex-col pt-[3px] pl-[2px]">
          <DockTitle>Tool</DockTitle>
          <div className="h-[54px] border-y border-t-[#aaa] border-b-white" />
          <div className="mb-px h-1 border-b border-black" />
          <DockTitle>Mesh List</DockTitle>
          <div className="h-[763px] border border-[#aaa] border-b-white bg-white pt-[2px] text-[12.4px] shadow-[inset_1px_1px_0_#000]">
            {names.map((n) => (
              <div key={n} className="flex h-[15px] items-center pl-[7px]">
                <svg width="17" height="15" shapeRendering="crispEdges" fill="none" stroke="#a0a0a0">
                  <path d="M4.500 0V15M9 7.500H14" strokeDasharray="1 1" />
                  <rect x=".5" y="3.500" width="8" height="8" fill="#fff" /><path d="M2 7.500H7M4.500 5V10" stroke="#000" />
                </svg>
                <span className="leading-[15px]">Face {n}</span>
              </div>
            ))}
          </div>
          <div className="mt-[2px] mb-px h-1 border-t border-b border-t-white border-b-black" />
          <DockTitle>Selection Info</DockTitle>
          <div className="h-[220px] border border-[#aaa] border-b-white bg-white shadow-[inset_1px_1px_0_#000]" />
        </aside>
        <div className="w-[6px] border-r border-l border-white border-r-black" />
        <div className="mt-[2px] h-[1333px] w-[2259px] bg-linear-to-b from-[#1118a0] to-[#6079c6]"><Mesh /></div>
        <div className="flex w-[35px] flex-col border-l border-white pt-[5px] pl-px">
          <Handle />
          <div className="pt-1">
            <SideButton k="pts" on /><SideButton k="edge" on /><SideButton k="face" on /><SideButton k="body" /><SideButton k="body2" />
          </div>
          <div className="mb-1 h-px bg-[#aaa]" />
          <Handle />
          <div className="pt-px">
            <SideButton k="wire" /><SideButton k="fit" /><SideButton k="clip" />
          </div>
          <Rule />
          <SideButton k="open" /><SideButton k="yel" /><SideButton k="grey" /><SideButton k="blue" /><SideButton k="hole" /><SideButton k="bref" />
          <Rule />
          <SideButton k="cut" />
        </div>
      </main>
      <div className="h-[29px] shrink-0 border-r-2 border-b-2 border-[#111]" />
      {/* document tabs */}
      <div className="flex h-[23px] shrink-0 items-start pl-[2px] text-[12.5px]">
        <div className="flex h-[21px] w-[80px] items-center border-b-2 border-l border-black border-l-white pl-[9px]">Untitled*</div>
        <div className="-mt-[2px] flex h-[25px] w-[95px] items-center border-r-2 border-b-2 border-l border-black border-l-white bg-[#dcdcdc] p-px">
          <div className="flex h-[20px] w-full items-center gap-1 border border-dotted border-black pt-px pl-[8px]">
            <span className="whitespace-nowrap">Mesh 1*</span>
            <span className="flex size-[14px] items-center justify-center rounded-[2px] bg-[#e8654a]"><svg width="8" height="8"><path d="M1 1L7 7M7 1L1 7" stroke="#fff" strokeWidth="2" /></svg></span>
          </div>
        </div>
      </div>
      {/* task bar */}
      <footer className="flex h-6 shrink-0 items-center bg-linear-to-r from-[#dcdcdc] via-[#dcdcdc] to-[#d2d3cf] text-[13.6px]">
        <svg width="16" height="16" viewBox="0 0 16 16" className="ml-1 shrink-0"><path d="M1 2H6L8 4H15V15H1Z" fill="#6f9352" stroke="#4d6b36" /><rect x="4" y="6" width="8" height="7" fill="#a9c68c" stroke="#3f5a2a" /><circle cx="8" cy="9.500" r="1.500" fill="#3f5a2a" /></svg>
        <span className="mr-[8px] ml-1 h-6 w-[10px] bg-[#d3d3d0]" />
        <div className="flex w-[209px] items-center gap-[7px]"><Folder /><span className="pt-px">[pspline]</span></div>
        <div className="flex w-[209px] items-center gap-[7px]"><Folder /><span className="pt-px">[Fusion1]</span></div>
        <div className="flex w-[209px] items-center gap-[7px]"><Folder home /><span className="pt-px">[riazu]</span></div>
        <div className="flex w-[201px] items-center gap-[8px]">
          <svg width="16" height="16"><rect x=".5" y="1.500" width="15" height="13" fill="#b8b8b8" stroke="#777" /><rect x="3" y="4" width="10" height="8" fill="#6f7470" /><path d="M4 5L6 7L4 9" stroke="#ddd" fill="none" /></svg>
          <span className="pt-px text-[13.3px]">[Mate Terminal]</span>
        </div>
        <div className="flex h-6 w-[210px] items-center gap-2 border border-[#57763b] bg-linear-to-b from-[#74905a] to-[#637b4d] pl-[9px]">
          <svg width="15" height="14"><rect x=".5" y=".5" width="14" height="12" fill="#f2f2ee" stroke="#777" /><rect width="15" height="3" fill="#2f66a8" /></svg>
          <span className="pt-px">Untitled*</span>
        </div>
        <div className="flex-1" />
        <div className="mr-[2px] flex h-[21px] w-[132px] gap-px border border-[#bdbdbd] bg-[#ddd]">
          <span className="flex flex-1 items-center justify-center border border-white border-b-[#7c9c60] bg-[#deefce]">
            <svg width="14" height="12"><rect x=".5" y=".5" width="13" height="11" fill="#eef0e8" stroke="#888" /><rect width="14" height="3" fill="#1f4f8c" /></svg>
          </span>
          <span className="flex-1 bg-[#999]" /><span className="flex-1 bg-[#999]" /><span className="flex-1 bg-[#999]" />
        </div>
      </footer>
    </div>
  );
}
